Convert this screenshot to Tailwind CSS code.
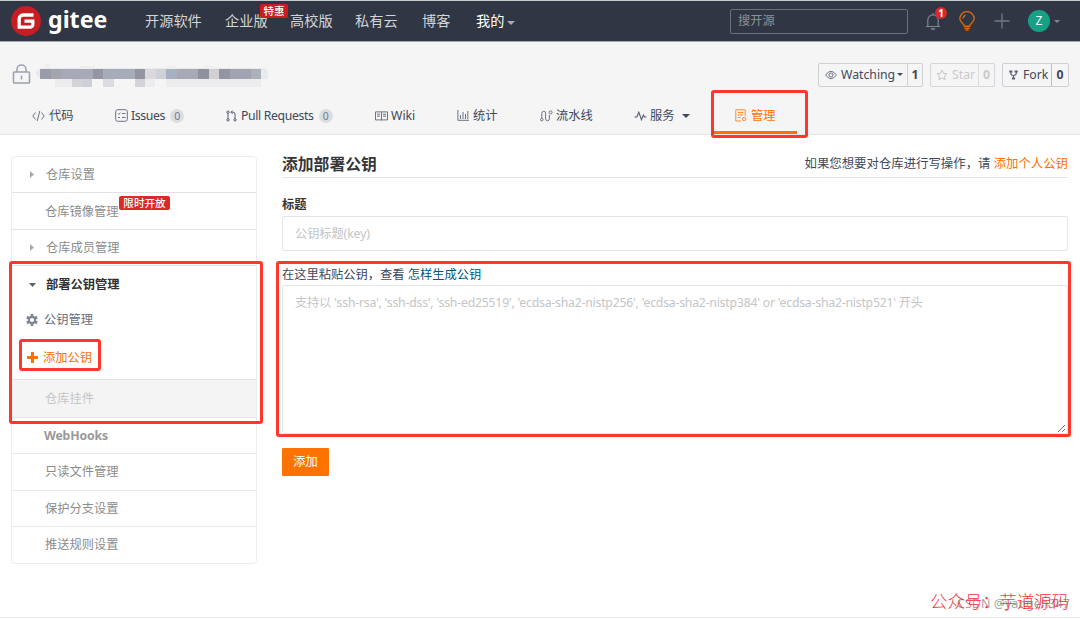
<!DOCTYPE html>
<html lang="zh-CN">
<head>
  <meta charset="UTF-8">
  <meta name="viewport" content="width=device-width, initial-scale=1.0">
  <title>添加部署公钥 - Gitee</title>
  <script src="https://cdn.jsdelivr.net/npm/@tailwindcss/browser@4"></script>
</head>
<body class="relative w-[1080px] h-[619px] overflow-hidden bg-white text-[12.25px] leading-4 text-[#40485b] font-['Noto_Sans','Noto_Sans_CJK_SC',sans-serif]">

  <!-- top bar -->
  <header class="flex items-center h-[42px] border-t border-t-[#c5cbca] border-b border-b-[#a6a9b1] bg-[#303643] text-[14.2px] text-[#d3d5d8] whitespace-nowrap">
    <a class="flex items-center w-[134px] pl-[11px] shrink-0" href="#">
      <svg class="w-[30px] h-[30px]" viewBox="0 0 30 30" fill="none">
        <circle cx="15" cy="15" r="15" fill="#c71d23"/>
        <path d="M22.5 9H12a3.8 3.8 0 0 0-3.8 3.8v8.4H19a2.8 2.8 0 0 0 2.8-2.8v-3.2h-8.3" stroke="#fff" stroke-width="3.3"/>
      </svg>
      <span class="pl-[7px] pb-[5px] text-[23.2px] leading-7 font-bold text-white">gitee</span>
    </a>
    <nav class="flex items-center pl-[11px] w-[596px] shrink-0">
      <a class="w-[80px]" href="#">开源软件</a>
      <a class="relative w-[65px]" href="#">企业版
        <span class="absolute left-[35px] -top-[9px] w-[28px] h-[14px] rounded-xs bg-[#c71d23] text-center text-[10.5px] leading-[14px] font-medium text-white">特惠</span>
      </a>
      <a class="w-[65px]" href="#">高校版</a>
      <a class="w-[67px]" href="#">私有云</a>
      <a class="w-[54px]" href="#">博客</a>
      <a class="flex items-center text-white" href="#">我的
        <svg class="ml-[3px] mt-1 w-2 h-1" viewBox="0 0 8 4" fill="#a6a9b1"><path d="M0 0h8L4 4z"/></svg>
      </a>
    </nav>
    <div class="flex items-center w-[178px] h-[25px] px-[7px] shrink-0 border border-[#6b707c] rounded-xs text-[12.25px] text-[#8d9199]">搜开源</div>
    <div class="relative ml-[17px] w-4 shrink-0">
      <svg class="w-4 h-[19px]" viewBox="0 0 16 19" fill="none" stroke="#7e8696" stroke-width="1.2">
        <path d="M1 14.5h14M2.8 14.2V8a5.2 5.2 0 0 1 10.4 0v6.2M8 2.6V1"/>
        <path d="M5.6 16.2h4.8a2.4 1.8 0 0 1-4.8 0z" fill="#7e8696" stroke="none"/>
      </svg>
      <span class="absolute left-[10px] -top-[5px] w-3 h-3 rounded-full bg-[#db2828] text-center text-[10px] leading-3 font-bold text-white">1</span>
    </div>
    <svg class="ml-[18px] w-4 h-5 shrink-0" viewBox="0 0 16 20" fill="none" stroke="#d0690f" stroke-width="1.4">
      <path d="M5.4 15.2C5.2 12.6.8 11.4.8 7.6a7.2 7 0 0 1 14.4 0c0 3.8-4.4 5-4.6 7.6z"/>
      <path d="M4 7.6a4 4 0 0 1 2.4-3.5M5.4 17.2h5.2M6.4 19h3.2"/>
    </svg>
    <svg class="ml-[19px] w-4 h-4 shrink-0" viewBox="0 0 16 16" stroke="#747a88" stroke-width="1.3"><path d="M8 .5v15M.5 8h15"/></svg>
    <span class="ml-[18px] w-[22px] h-[22px] rounded-full shrink-0 bg-[#16a085] text-center text-[12px] leading-[22px] text-white">Z</span>
    <svg class="ml-1 w-[6px] h-[3px] shrink-0" viewBox="0 0 6 3" fill="#7e8696"><path d="M0 0h6L3 3z"/></svg>
  </header>

  <!-- repository header -->
  <section class="h-[93px] bg-[#f5f5f5] border-b border-[#e4e5e7]">
    <div class="flex items-center h-[65px]">
      <svg class="ml-[12px] mb-[2px] w-[19px] h-5 shrink-0" viewBox="0 0 19 20" fill="none" stroke="#99a0ae" stroke-width="1.5">
        <rect x="1.5" y="8" width="16" height="11" rx=".8"/>
        <path d="M5 8V5.200a4.500 4.200 0 0 1 9 0V8M9.500 11.500v4"/>
      </svg>
      <!-- blurred repository name -->
      <svg class="ml-1 w-[236px] h-6 shrink-0" viewBox="0 0 236 24" shape-rendering="crispEdges">
        <path d="M8 5h222q6 6 2 11H14Q-4 14 2 7z" fill="#e9eaed"/>
        <path d="M10 1h5v5h-5zM45 3h15v3H45zM131 3h10v3h-10zM168 3h10v3h-10z" fill="#eeeeef"/>
        <path d="M20 16h17v9H20zM68 16h11v9H68zM110 16h10v9h-10zM131 16h95v9h-95z" fill="#ececee"/>
        <path d="M37 16h10v10H37zM100 16h10v10h-10z" fill="#d3d4d8"/>
        <path d="M47 16h10v10H47z" fill="#cdd0d9"/>
        <path d="M68 16h11v10H68z" fill="#dadce1"/>
        <path d="M5 6h11v10H5z" fill="#999ba8"/>
        <path d="M16 6h10v10H16z" fill="#a4a4ac"/>
        <path d="M26 6h32v10H26z" fill="#a6a9b7"/>
        <path d="M58 6h10v10H58z" fill="#9496a3"/>
        <path d="M68 6h32v10H68z" fill="#a7acba"/>
        <path d="M100 6h10v10h-10z" fill="#9395a2"/>
        <path d="M110 6h11v10h-11z" fill="#dad8dc"/>
        <path d="M121 6h10v10h-10z" fill="#d0d1d6"/>
        <path d="M131 6h11v10h-11z" fill="#a7b1bf"/>
        <path d="M142 6h21v10h-21z" fill="#a6a9b6"/>
        <path d="M163 6h11v10h-11z" fill="#8f90a0"/>
        <path d="M174 6h10v10h-10z" fill="#d2d0d3"/>
        <path d="M184 6h11v10h-11z" fill="#9396a2"/>
        <path d="M195 6h21v10h-21z" fill="#a0a4b2"/>
        <path d="M216 6h10v10h-10z" fill="#acb1b9"/>
      </svg>
      <div class="ml-auto mr-[11px] flex gap-[7px] leading-[22px]">
        <div class="flex w-[105px] h-6 border border-[#ced0d6] rounded-xs">
          <span class="flex items-center w-[88px] pl-[6px]">
            <svg class="mr-1 w-3 h-[10px]" viewBox="0 0 12 10" fill="none" stroke="#6c7382"><path d="M.6 5Q6-2.500 11.400 5 6 12.500.6 5z"/><circle cx="6" cy="5" r="2"/></svg>
            Watching
            <svg class="ml-[2px] w-[6px] h-[3px]" viewBox="0 0 6 3" fill="#40485b"><path d="M0 0h6L3 3z"/></svg>
          </span>
          <b class="grow border-l border-[#ced0d6] text-center">1</b>
        </div>
        <div class="flex w-[65px] h-6 border border-[#d4d6db] rounded-xs text-[#c9cacd]">
          <span class="flex items-center w-[47px] pl-[5px]">
            <svg class="mr-1 w-3 h-3" viewBox="0 0 12 12" fill="none" stroke="#c4c6ca"><path d="M6 1l1.500 3.300 3.500.4-2.600 2.400.7 3.600L6 8.900l-3.100 1.800.7-3.600L1 4.700l3.500-.4z"/></svg>
            Star
          </span>
          <b class="grow border-l border-[#dcdde1] text-center">0</b>
        </div>
        <div class="flex w-[67px] h-6 border border-[#ced0d6] rounded-xs">
          <span class="flex items-center w-[48px] pl-[6px]">
            <svg class="mr-[5px] w-[9px] h-[10px]" viewBox="0 0 9 10" fill="none" stroke="#5b6375" stroke-width="1.200"><path d="M1.800 2v1.400Q1.800 5 4.500 5.500 7.200 5 7.200 3.400V2M4.500 5.500V8"/><path d="M.8 1h2v1h-2zM6.200 1h2v1h-2zM3.500 8h2v1h-2z"/></svg>
            Fork
          </span>
          <b class="grow border-l border-[#b9bcc5] text-center">0</b>
        </div>
      </div>
    </div>

    <!-- tabs -->
    <nav class="flex h-[27px] pl-8 items-stretch whitespace-nowrap">
      <a class="flex items-center w-[83px] pb-[10px]" href="#">
        <svg class="mr-1 w-[13px] h-3" viewBox="0 0 13 12" fill="none" stroke="#6c7382"><path d="M3.500 2.500L.8 6l2.700 3.500M9.500 2.500L12.200 6 9.500 9.500M7.800 1L5.200 11"/></svg>
        代码
      </a>
      <a class="flex items-center w-[111px] pb-[10px] tracking-[-0.35px]" href="#">
        <svg class="mr-[3px] w-[13px] h-[13px]" viewBox="0 0 13 13" fill="none" stroke="#6c7382"><rect x=".7" y=".7" width="11.600" height="11.600" rx="2"/><path d="M3 4.500l.9.900 1.500-1.800M7 4.500h3.500M3 8.500h2M7 8.500h3.500"/></svg>
        Issues
        <span class="ml-[5px] w-[14px] h-[14px] rounded-full bg-[#dcdde0] text-center text-[10.5px] leading-[14px] text-[#6d7a99]">0</span>
      </a>
      <a class="flex items-center w-[149px] pb-[10px] tracking-[-0.35px]" href="#">
        <svg class="mr-[4px] w-[11px] h-3" viewBox="0 0 11 12" fill="none" stroke="#555d6f"><circle cx="2" cy="2.200" r="1.200"/><circle cx="2" cy="9.800" r="1.200"/><circle cx="9" cy="9.800" r="1.200"/><path d="M2 3.400v5.200M9 8.600V4q0-1.800-1.800-1.800H5M6.600.6L5 2.200l1.600 1.600"/></svg>
        Pull Requests
        <span class="ml-[5px] w-[14px] h-[14px] rounded-full bg-[#dcdde0] text-center text-[10.5px] leading-[14px] text-[#6d7a99]">0</span>
      </a>
      <a class="flex items-center w-[82px] pb-[10px]" href="#">
        <svg class="mr-[3px] w-[13px] h-[10px]" viewBox="0 0 13 10" fill="none" stroke="#6c7382"><path d="M.5.900h12v8H7.300l-.8.700-.8-.700H.5zM6.500 1v8M2 3.200h3M2 5.200h3M8 3.200h3M8 5.200h3"/></svg>
        Wiki
      </a>
      <a class="flex items-center w-[83px] pb-[10px]" href="#">
        <svg class="mr-[4px] w-[12px] h-[11px]" viewBox="0 0 12 11" fill="none" stroke="#6c7382"><path d="M.9 0v10.300H12M3.500 5v4M6 2v7M8.500 4v5M10.800 1v8"/></svg>
        统计
      </a>
      <a class="flex items-center w-[94px] pb-[10px]" href="#">
        <svg class="mr-[3px] w-[13px] h-3" viewBox="0 0 13 12" fill="none" stroke="#6c7382"><path d="M1.800 8V3.200a1.900 1.900 0 0 1 3.800 0v5.600a1.900 1.900 0 0 0 3.800 0V4.800"/><circle cx="1.800" cy="9.600" r="1.300"/><circle cx="10.600" cy="2.400" r="1.500"/></svg>
        流水线
      </a>
      <a class="flex items-center w-[78px] pb-[10px]" href="#">
        <svg class="mr-[3px] w-[13px] h-[10px]" viewBox="0 0 13 10" fill="none" stroke="#555d6f" stroke-width="1.100"><path d="M.5 6h2.300l2-4.800 2.700 7.500 1.900-4.700L10.500 6h2"/></svg>
        服务
        <svg class="ml-[7px] w-[8px] h-[4px]" viewBox="0 0 8 4" fill="#40485b"><path d="M0 0h8L4 4z"/></svg>
      </a>
      <a class="flex items-center w-[85px] pl-[23px] pb-[7px] border-b-[3px] border-[#fe7300] text-[#fe7300]" href="#">
        <svg class="mr-[4px] w-[12px] h-[13px]" viewBox="0 0 12 13" fill="none" stroke="#fe8a35"><path d="M6 12H.8V.8h9.400V7M3 3.500h5M3 6h5M3 8.500h2.500"/><circle cx="9.200" cy="10" r="1.700"/></svg>
        管理
      </a>
    </nav>
  </section>

  <main class="flex">
    <!-- settings menu -->
    <aside class="ml-[11px] mt-[21px] w-[246px] h-[408px] shrink-0 border border-[#e9edf1] rounded-sm text-[#8c8c8c]">
      <a class="flex items-center h-[36px] pl-[18px] border-b border-[#e1e2e4]" href="#">
        <svg class="mr-[12px] w-[4px] h-[7px]" viewBox="0 0 4 7" fill="#a9a9a9"><path d="M0 0l4 3.500L0 7z"/></svg>
        仓库设置
      </a>
      <a class="relative flex items-center h-[37px] pl-[33px] pt-[2px] border-b border-[#e1e2e4]" href="#">仓库镜像管理
        <span class="absolute left-[107px] top-[3px] w-[51px] h-[14px] rounded-xs bg-[#db2828] text-center text-[10.6px] leading-[14px] font-medium text-white">限时开放</span>
      </a>
      <a class="flex items-center h-[36px] pl-[18px] border-b border-[#e1e2e4]" href="#">
        <svg class="mr-[12px] w-[4px] h-[7px]" viewBox="0 0 4 7" fill="#a9a9a9"><path d="M0 0l4 3.500L0 7z"/></svg>
        仓库成员管理
      </a>
      <a class="flex items-center h-[36px] pl-[17px] pt-[2px] font-bold text-[#303030]" href="#">
        <svg class="mr-[10px] w-[7px] h-[4px]" viewBox="0 0 7 4" fill="#606060"><path d="M0 0h7L3.500 4z"/></svg>
        部署公钥管理
      </a>
      <a class="flex items-center h-[36px] pl-[14px] text-[#666d7b]" href="#">
        <svg class="mr-[6px] w-3 h-3" viewBox="0 0 12 12" fill="none" stroke="#7d8492"><circle cx="6" cy="6" r="3.200" stroke-width="2.200"/><path d="M6 0v2M6 10v2M.8 3l1.800 1M9.400 8l1.800 1M.8 9l1.800-1M9.400 4l1.800-1" stroke-width="2.600"/></svg>
        公钥管理
      </a>
      <a class="flex items-center h-[41px] pl-[15px] pb-[2px] text-[#fe7300]" href="#">
        <svg class="mr-[5px] w-[11px] h-[11px]" viewBox="0 0 11 11" stroke="#fe7300" stroke-width="3"><path d="M5.500 0v11M0 5.500h11"/></svg>
        添加公钥
      </a>
      <a class="flex items-center h-[39px] pl-[33px] border-y border-[#e3e4e5] bg-[#f4f4f4] text-[#c6c6c6]" href="#">仓库挂件</a>
      <a class="flex items-center h-[36px] pl-[32px] border-b border-[#e8e9ea] font-bold tracking-[-0.15px] text-[#999999]" href="#">WebHooks</a>
      <a class="flex items-center h-[37px] pl-[33px] border-b border-[#e8e9ea]" href="#">只读文件管理</a>
      <a class="flex items-center h-[36px] pl-[33px] border-b border-[#e8e9ea]" href="#">保护分支设置</a>
      <a class="flex items-center h-[36px] pl-[33px]" href="#">推送规则设置</a>
    </aside>

    <!-- deploy key form -->
    <form class="ml-[25px] mt-[16px] w-[786px]">
      <div class="flex items-center justify-between h-[27px] border-b border-[#e3e5e8]">
        <h1 class="text-[15.8px] leading-6 font-bold text-[#363636]">添加部署公钥</h1>
        <p class="text-[12.4px] text-[#40485b]">如果您想要对仓库进行写操作，请 <a class="text-[#fe7300]" href="#">添加个人公钥</a></p>
      </div>
      <label class="block mt-[19px] font-bold text-[#363636]">标题</label>
      <div class="flex items-center mt-[3px] h-[35px] px-3 border border-[#e3e5ea] rounded-xs tracking-[-0.1px] text-[#c4c5c8]">公钥标题(key)</div>
      <p class="mt-[16px]">在这里粘贴公钥，查看 <a class="text-[#005980]" href="#">怎样生成公钥</a></p>
      <div class="flex justify-between mt-[2px] h-[149px] pl-3 pt-[9px] border border-[#e3e5ea] rounded-xs text-[#c4c5c8]">
        <span class="tracking-[-0.215px]">支持以 'ssh-rsa', 'ssh-dss', 'ssh-ed25519', 'ecdsa-sha2-nistp256', 'ecdsa-sha2-nistp384' or 'ecdsa-sha2-nistp521' 开头</span>
        <svg class="self-end w-[9px] h-[9px]" viewBox="0 0 9 9" fill="none" stroke="#777"><path d="M0 8l7-7M4 8l3-3"/></svg>
      </div>
      <button class="block mt-[14px] w-[47px] h-[28px] rounded-[1px] bg-[#fe7300] text-white" type="button">添加</button>
    </form>
  </main>

  <div class="absolute top-[617px] w-full h-px bg-[#e7eaea]"></div>

  <!-- highlights -->
  <div class="absolute left-[711px] top-[90px] w-[97px] h-[48px] border-3 border-[#ff2116]/90 rounded-[3px]"></div>
  <div class="absolute left-[9px] top-[261px] w-[254px] h-[163px] border-3 border-[#ff2116]/90 rounded-[3px]"></div>
  <div class="absolute left-[19px] top-[339px] w-[82px] h-[32px] border-3 border-[#ff2116]/90 rounded-[3px]"></div>
  <div class="absolute left-[276px] top-[261px] w-[795px] h-[176px] border-3 border-[#ff2116]/90 rounded-[3px]"></div>

  <!-- watermarks -->
  <span class="absolute left-[957px] top-[596px] text-[12.5px] text-[#a5a5a5] whitespace-nowrap">CSDN @yangen347</span>
  <span class="absolute left-[930px] top-[589px] text-[17.4px] leading-6 text-[#f5323a] whitespace-nowrap font-['Noto_Sans_CJK_SC',sans-serif] font-light">公众号：芋道源码</span>
</body>
</html>
